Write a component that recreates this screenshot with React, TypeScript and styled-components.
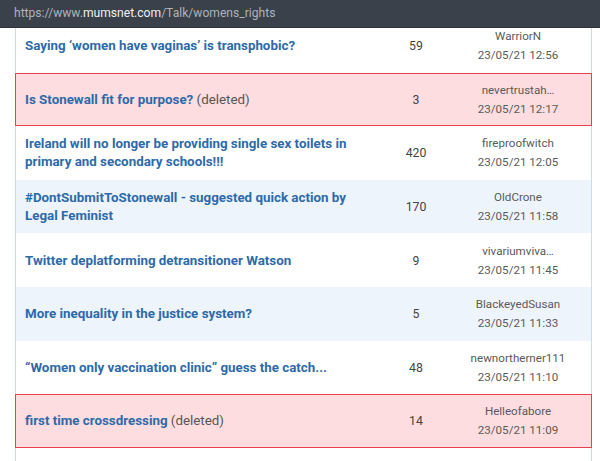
import React from "react";
import styled, { createGlobalStyle } from "styled-components";

const Global = createGlobalStyle`
  html, body { margin: 0; padding: 0; background: #ffffff; }
  body { font-family: Roboto, "Liberation Sans", Arial, sans-serif; }
  * { box-sizing: border-box; }
`;

const Page = styled.div`
  width: 600px;
  height: 461px;
  display: flex;
  flex-direction: column;
  overflow: hidden;
  background: #ffffff;
`;

const AddressBar = styled.div`
  height: 28px;
  flex: none;
  background: #3a414b;
  border-bottom: 1px solid #2e343c;
  display: flex;
  align-items: center;
  padding: 0 0 1px 14px;
  font-family: Roboto, "Noto Sans", sans-serif;
  font-size: 12.1px;
  color: #aeb3ba;
  position: relative;
  z-index: 1;
`;

const Host = styled.span`
  color: #eef0f2;
`;

const Viewport = styled.div`
  flex: 1;
  overflow: hidden;
`;

const List = styled.div`
  width: 577px;
  margin: -9px 0 0 15px;
  display: flex;
  flex-direction: column;
`;

const Row = styled.div<{ $deleted?: boolean; $alt?: boolean }>`
  display: grid;
  grid-template-columns: 340px 102px 102px;
  align-items: center;
  min-height: 53.6px;
  padding: 1px 22px 0 9px;
  border-left: 1px solid ${(p) => (p.$deleted ? "#e9404f" : "#c7dcf1")};
  border-right: 1px solid ${(p) => (p.$deleted ? "#e9404f" : "#c7dcf1")};
  border-top: ${(p) => (p.$deleted ? "1px solid #e9404f" : "none")};
  border-bottom: ${(p) => (p.$deleted ? "1px solid #e9404f" : "none")};
  background: ${(p) => (p.$deleted ? "#fddde0" : p.$alt ? "#eef4fb" : "#ffffff")};
`;

const Title = styled.div`
  font-size: 13.35px;
  line-height: 18px;
  font-weight: 700;
  color: #2d6aa9;
`;

const Deleted = styled.span`
  font-weight: 400;
  color: #555555;
`;

const Count = styled.div`
  text-align: center;
  font-size: 12.3px;
  color: #444444;
`;

const Meta = styled.div`
  text-align: center;
  font-size: 11.6px;
  line-height: 19px;
  color: #5a5a5a;
  white-space: nowrap;
`;

type Thread = {
  title: string;
  deleted?: boolean;
  count: number;
  author: string;
  date: string;
};

const threads: Thread[] = [
  { title: "Saying ‘women have vaginas’ is transphobic?", count: 59, author: "WarriorN", date: "23/05/21 12:56" },
  { title: "Is Stonewall fit for purpose?", deleted: true, count: 3, author: "nevertrustah…", date: "23/05/21 12:17" },
  { title: "Ireland will no longer be providing single sex toilets in primary and secondary schools!!!", count: 420, author: "fireproofwitch", date: "23/05/21 12:05" },
  { title: "#DontSubmitToStonewall - suggested quick action by Legal Feminist", count: 170, author: "OldCrone", date: "23/05/21 11:58" },
  { title: "Twitter deplatforming detransitioner Watson", count: 9, author: "vivariumviva…", date: "23/05/21 11:45" },
  { title: "More inequality in the justice system?", count: 5, author: "BlackeyedSusan", date: "23/05/21 11:33" },
  { title: "“Women only vaccination clinic” guess the catch...", count: 48, author: "newnortherner111", date: "23/05/21 11:10" },
  { title: "first time crossdressing", deleted: true, count: 14, author: "Helleofabore", date: "23/05/21 11:09" },
  { title: "", count: 0, author: "", date: "" },
];

export default function App() {
  return (
    <Page>
      <Global />
      <AddressBar>
        https://www.<Host>mumsnet.com</Host>/Talk/womens_rights
      </AddressBar>
      <Viewport>
        <List>
          {threads.map((t, i) =>
            t.title ? (
              <Row key={i} $deleted={t.deleted} $alt={i % 2 === 1}>
                <Title>
                  {t.title}
                  {t.deleted && <Deleted> (deleted)</Deleted>}
                </Title>
                <Count>{t.count}</Count>
                <Meta>
                  {t.author}
                  <br />
                  {t.date}
                </Meta>
              </Row>
            ) : (
              <Row key={i} />
            )
          )}
        </List>
      </Viewport>
    </Page>
  );
}
